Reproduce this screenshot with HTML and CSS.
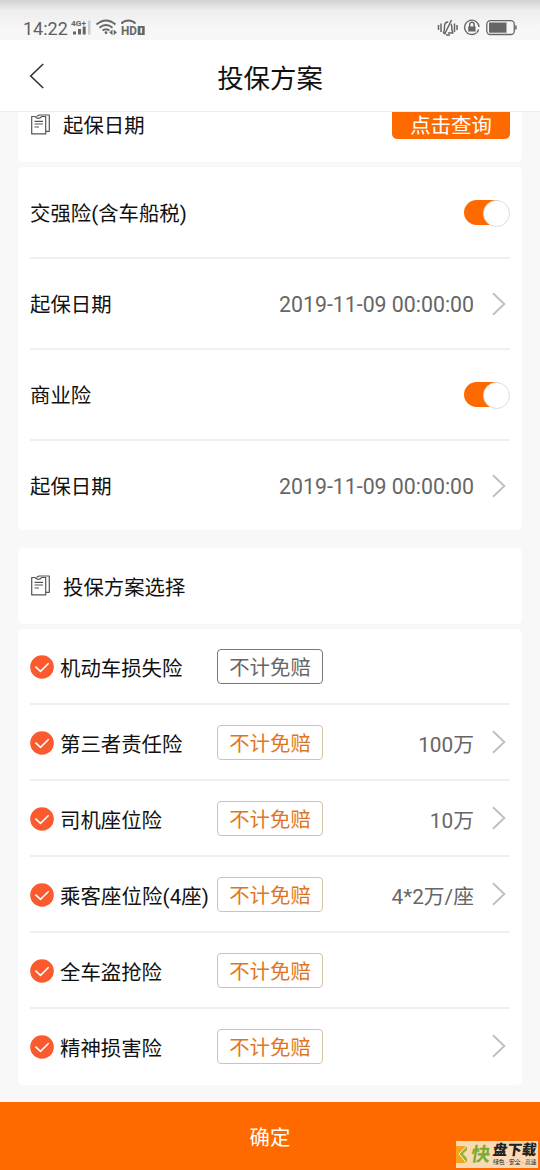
FILE: index.html
```html
<!DOCTYPE html>
<html lang="zh-CN">
<head>
<meta charset="utf-8">
<title>投保方案</title>
<link rel="stylesheet" href="styles.css">
</head>
<body>
<svg class="defs" aria-hidden="true">
  <symbol id="doc" viewBox="0 0 20 21"><path d="M1.700 2.500H5q1 2 3.500 1.800T11.500 2.500h4.200v17.400H1.700zM6.500 2.500 9 1h10.300v16.300h-3.600M4.500 7.300h8.500M4.500 10h8.500M4.500 13h4.500" fill="none" stroke="#555" stroke-width="1.200" stroke-linejoin="round"/></symbol>
  <symbol id="arrow" viewBox="0 0 14 24"><path d="M1 1.2 12.3 12 1 22.8" fill="none" stroke="#c0c0c0" stroke-width="2"/></symbol>
  <symbol id="check" viewBox="0 0 24 24"><circle cx="12" cy="12" r="11.8" fill="#fa5a2d"/><path d="m5.4 11.6 5.1 4.8 8.2-8.2" fill="none" stroke="#fff" stroke-width="1.5"/></symbol>
</svg>
<div class="screen">
  <div class="status">
    <span class="clock">14:22</span>
    <svg class="signals" width="76" height="20" viewBox="0 0 76 20" fill="#666">
      <text class="net" x="1" y="7.500" textLength="15" lengthAdjust="spacingAndGlyphs">4G+</text>
      <path d="M3 13.500h3v3H3zM8 11h3v5.500H8zM12.700 8.500h3v8h-3z"/><path d="M18 2.500h2.500v14H18z" fill="#ccc"/>
      <g fill="none" stroke="#666" stroke-width="1.900"><path d="M26.500 6.500q9.500-8 19 0M29.500 9.700q6.500-5.200 13 0M32.500 12.600q3.500-2.600 7 0"/><path d="M52.200 6V4.500q6.200-3.800 12.400 0V6" stroke-width="2"/></g>
      <circle cx="36" cy="14.700" r="1.400"/><path d="m42.500 11.500-3.200 2.900 3.200 2.900zM43.700 11.500l3.200 2.900-3.200 2.900z"/>
      <text class="hd" x="51" y="17" textLength="16" lengthAdjust="spacingAndGlyphs">HD</text>
      <path d="M67.700 8h7v9h-7z"/><path d="M70.400 9.800h1.700v5.400h-1.700z" fill="#f3f3f3"/>
    </svg>
    <svg class="device" width="80" height="20" viewBox="0 0 80 20" fill="none" stroke="#666" stroke-width="1.500">
      <path d="M1.500 7v5M4 5.500v8.500M20 7v5M17.500 5.500v8.500M6 15q1.500-1 1.500-6.500 0-4.500 3.700-4.500M14 6q.8 1 .8 4t1.200 5M6 15h3M11 15h5.500M14.500 2 7.500 16.500M9 17h4"/>
      <path d="M39.500 14.800a7.200 7.200 0 1 1 2.500-5.800M41.500 11.500a7 7 0 0 1-1.600 3" stroke-width="1.400"/><path d="M31.200 8.500h7.400v5h-7.400z" fill="#666" stroke="none"/><path d="M32.700 9V6.500a2.200 2.200 0 0 1 4.400 0V9"/>
      <rect x="49.800" y="2.700" width="27.500" height="13.800" rx="3.500" stroke-width="1.300"/><path d="M52 4.500h17.500v10.200H52z" fill="#666" stroke="none"/><path d="M78.900 7.500v4"/>
    </svg>
  </div>
  <header class="header">
    <svg class="back" width="16" height="26" viewBox="0 0 16 26"><path d="M14.200 1 1.700 13 14.200 25" fill="none" stroke="#333" stroke-width="1.600"/></svg>
    <h1>投保方案</h1>
  </header>
  <main class="content">
    <section class="card card-date"><svg class="doc"><use href="#doc"/></svg><span>起保日期</span><button class="query">点击查询</button></section>
    <section class="card card-insure">
      <div class="row"><span class="label">交强险(含车船税)</span><i class="switch"></i></div>
      <div class="row"><span class="label">起保日期</span><span class="value date">2019-11-09 00:00:00</span><svg class="arrow"><use href="#arrow"/></svg></div>
      <div class="row"><span class="label">商业险</span><i class="switch"></i></div>
      <div class="row"><span class="label">起保日期</span><span class="value date">2019-11-09 00:00:00</span><svg class="arrow"><use href="#arrow"/></svg></div>
    </section>
    <section class="card card-title"><svg class="doc"><use href="#doc"/></svg><span>投保方案选择</span></section>
    <section class="card card-plan">
      <div class="row"><svg class="check"><use href="#check"/></svg><span class="name">机动车损失险</span><span class="tag tag-gray">不计免赔</span></div>
      <div class="row"><svg class="check"><use href="#check"/></svg><span class="name">第三者责任险</span><span class="tag">不计免赔</span><span class="value">100万</span><svg class="arrow"><use href="#arrow"/></svg></div>
      <div class="row"><svg class="check"><use href="#check"/></svg><span class="name">司机座位险</span><span class="tag">不计免赔</span><span class="value">10万</span><svg class="arrow"><use href="#arrow"/></svg></div>
      <div class="row"><svg class="check"><use href="#check"/></svg><span class="name seats">乘客座位险(4座)</span><span class="tag">不计免赔</span><span class="value">4*2万/座</span><svg class="arrow"><use href="#arrow"/></svg></div>
      <div class="row"><svg class="check"><use href="#check"/></svg><span class="name">全车盗抢险</span><span class="tag">不计免赔</span></div>
      <div class="row"><svg class="check"><use href="#check"/></svg><span class="name">精神损害险</span><span class="tag">不计免赔</span><span class="value"></span><svg class="arrow"><use href="#arrow"/></svg></div>
    </section>
  </main>
  <footer class="confirm">确定</footer>
  <div class="stamp">
    <svg width="12" height="27" viewBox="0 0 12 27"><path d="M0 5h11L3 13l8 9H0z" fill="#f5a51d"/><path d="m11 5-8 8 8 9v-5l-4-4 4-4z" fill="#9cb52c"/><path d="M10.500 5 3 13l7.500 9" fill="none" stroke="#fff0d0"/></svg>
    <span class="stamp-lead">快</span>
    <span class="stamp-text"><b>盘下载</b><small>绿色 · 安全 · 高速</small></span>
  </div>
</div>
</body>
</html>
```
FILE: styles.css
```css
* { box-sizing: border-box; }
body { margin: 0; font-family: Roboto, "Noto Sans CJK SC", sans-serif; color: #111; font-size: 20.4px; }
.defs { position: absolute; width: 0; height: 0; }
.screen { position: relative; width: 540px; height: 1170px; display: flex; flex-direction: column; background: #f8f8f8; overflow: hidden; }
.status { height: 40px; flex: none; display: flex; align-items: flex-start; padding: 18px 23px 0; background: linear-gradient(#d2d2d2, #ededed 10px, #f7f7f7 28px); }
.clock { font-size: 18px; line-height: 21px; color: #606060; width: 47px; white-space: nowrap; }
.signals { flex: none; }
.device { margin-left: auto; }
.net { font: bold 7.5px Roboto, sans-serif; }
.hd { font: bold 12.5px Roboto, sans-serif; }
.header { height: 72px; flex: none; display: grid; grid-template-columns: 60px 1fr 60px; align-items: center; background: #fff; border-bottom: 1px solid #ececec; }
.back { margin-left: 29px; }
h1 { margin: 0; padding-top: 6px; font-size: 26.4px; line-height: 36px; font-weight: 400; text-align: center; }
.content { flex: none; height: 990px; padding: 0 18px; overflow: hidden; }
.card { background: #fff; border-radius: 5px; padding: 0 12px; }
.card-date, .card-title { display: flex; align-items: center; }
.card-date { height: 50px; align-items: flex-start; border-radius: 0 0 5px 5px; line-height: 28px; }
.doc { width: 20px; height: 21px; margin-right: 13px; flex: none; }
.card-date .doc { margin-top: 2px; }
.card-title .doc { margin-bottom: 2px; }
.query { margin: -7px 0 0 auto; width: 118px; height: 34px; padding: 7px 0 0; border: 0; border-radius: 5px; background: #ff6a00; color: #fff; font: inherit; line-height: 26px; }
.card-insure { margin-top: 5px; padding-top: 1px; height: 363px; }
.card-title { height: 76px; margin-top: 18px; }
.card-plan { height: 456px; margin-top: 5px; }
.row { display: flex; align-items: center; height: 91px; border-bottom: 2px solid #f0f0f0; padding-top: 2px; }
.row:last-child { border-color: transparent; }
.card-plan .row { height: 76px; }
.label { margin-bottom: 3px; }
.switch { width: 46px; height: 25px; margin: 0 0 2px auto; border-radius: 13px; background: linear-gradient(90deg, #ff6a00 34px, transparent 34px); display: flex; justify-content: flex-end; }
.switch::after { content: ""; width: 25px; height: 25px; border: 1px solid #ddd; border-radius: 50%; background: #fff; }
.value { margin-left: auto; color: #666; font-size: 20.8px; }
.date { font-size: 21.3px; }
.arrow { width: 14px; height: 24px; margin: 0 4px 2px 18px; flex: none; }
.check { width: 24px; height: 24px; margin: 0 6px 1px 0; flex: none; }
.name { width: 157px; white-space: nowrap; flex: none; }
.seats { letter-spacing: .12px; }
.tag { width: 106px; height: 35px; flex: none; border: 1px solid #d5c1a5; border-radius: 4px; color: #df7624; line-height: 37px; text-align: center; margin-bottom: 1px; }
.tag-gray { border-color: #777; color: #666; }
.confirm { height: 68px; flex: none; background: #ff6a00; color: #fff; text-align: center; line-height: 72px; }
.stamp { position: absolute; right: 2px; bottom: 2px; width: 82px; height: 27px; background: #fbd9b4; display: flex; align-items: center; overflow: hidden; }
.stamp-lead { color: #79ad2c; font-size: 19px; line-height: 24px; font-weight: bold; width: 22px; margin-left: 3px; transform: skewX(-8deg); }
.stamp-text { display: flex; flex-direction: column; color: #222; white-space: nowrap; }
.stamp-text b { font-size: 14.5px; line-height: 15px; font-weight: 900; transform: skewX(-8deg); }
.stamp-text small { font-size: 5.8px; line-height: 8px; }
```
